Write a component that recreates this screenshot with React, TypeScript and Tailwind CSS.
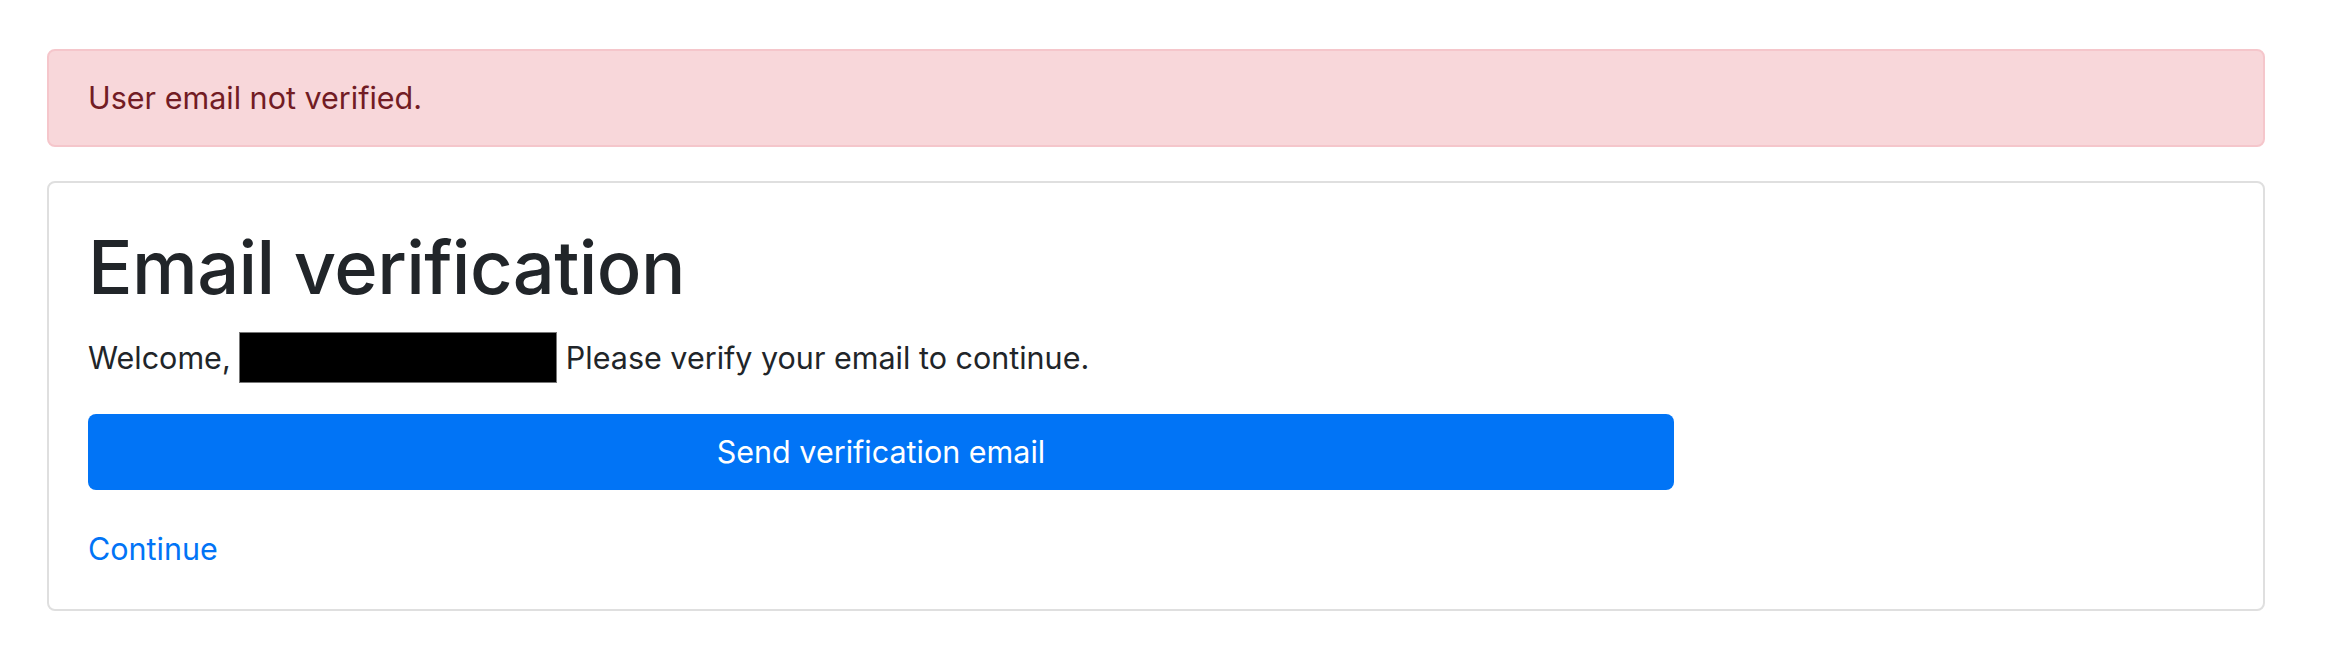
export default function App() {
  return (
    <div
      className="min-h-[660px] bg-white pt-[49px] pr-[67px] pl-[47px]"
      style={{ fontFamily: 'Inter, "Liberation Sans", Arial, sans-serif' }}
    >
      <div className="flex h-[98px] items-center rounded-[8px] border-2 border-[#f5c6cb] bg-[#f8d7da] px-[39px] text-[30.5px] text-[#721c24]">
        User email not verified.
      </div>

      <div className="mt-[34px] rounded-[8px] border-2 border-[#dfdfdf] bg-white px-[39px] pt-[40px] pb-[37px] text-[#212529]">
        <h1 className="mb-[20px] text-[74px] font-medium leading-[1.2] tracking-[-0.6px]">Email verification</h1>
        <p className="mb-[31px] flex items-center text-[30.5px] leading-[47px]">
          <span>Welcome,&nbsp;</span>
          <span className="inline-block h-[51px] w-[318px] border border-[#777] bg-black" />
          <span>&nbsp;Please verify your email to continue.</span>
        </p>
        <button
          type="button"
          className="h-[76px] w-[1586px] rounded-[8px] bg-[#0174f6] text-[30.5px] text-white"
        >
          Send verification email
        </button>
        <div className="mt-[35px] text-[30.5px] leading-[47px]">
          <a href="#" className="text-[#0174f6]">
            Continue
          </a>
        </div>
      </div>
    </div>
  );
}
